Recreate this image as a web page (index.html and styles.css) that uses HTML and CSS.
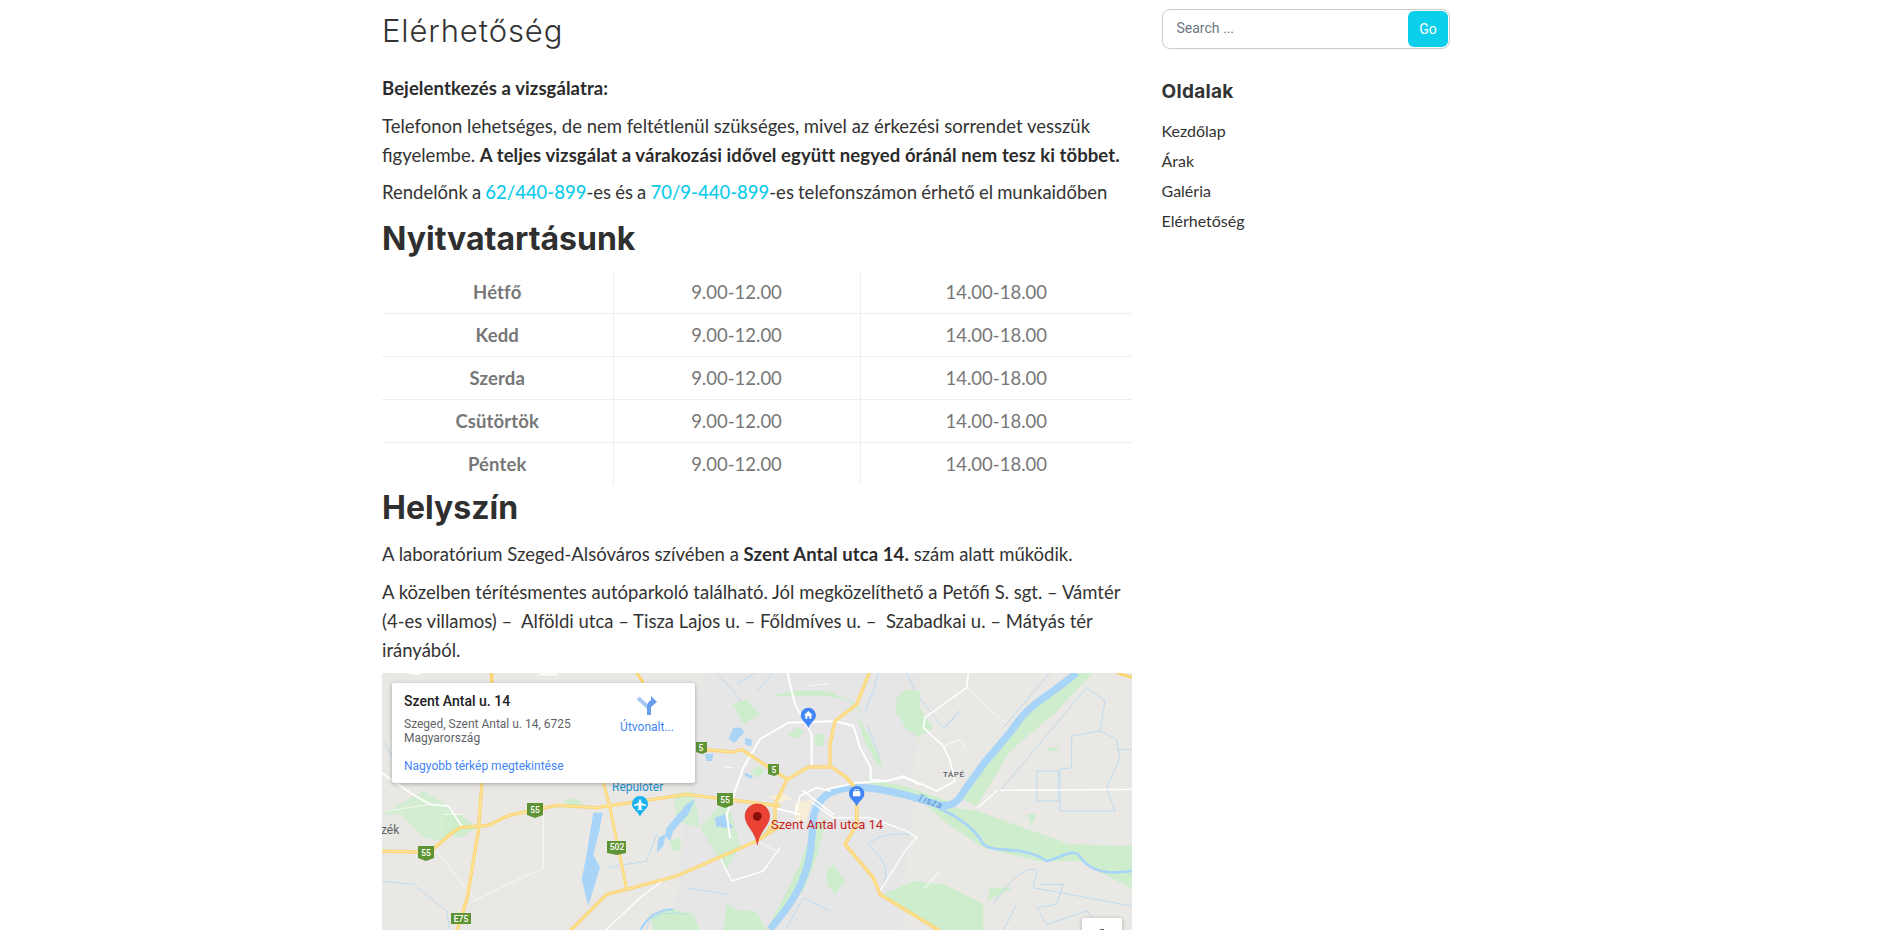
FILE: index.html
```html
<!DOCTYPE html>
<html lang="hu">
<head>
<meta charset="utf-8">
<title>Elérhetőség</title>
<link rel="stylesheet" href="styles.css">
</head>
<body>
<div class="page">
  <main class="content">
    <h1 class="title">Elérhetőség</h1>
    <p class="intro"><strong>Bejelentkezés a vizsgálatra:</strong></p>
    <p>Telefonon lehetséges, de nem feltétlenül szükséges, mivel az érkezési sorrendet vesszük figyelembe. <strong>A teljes vizsgálat a várakozási idővel együtt negyed óránál nem tesz ki többet.</strong></p>
    <p class="phones">Rendelőnk a <a href="#">62/440-899</a>-es és a <a href="#">70/9-440-899</a>-es telefonszámon érhető el munkaidőben</p>
    <h2 class="section">Nyitvatartásunk</h2>
    <table class="hours">
      <tr><th>Hétfő</th><td>9.00-12.00</td><td>14.00-18.00</td></tr>
      <tr><th>Kedd</th><td>9.00-12.00</td><td>14.00-18.00</td></tr>
      <tr><th>Szerda</th><td>9.00-12.00</td><td>14.00-18.00</td></tr>
      <tr><th>Csütörtök</th><td>9.00-12.00</td><td>14.00-18.00</td></tr>
      <tr><th>Péntek</th><td>9.00-12.00</td><td>14.00-18.00</td></tr>
    </table>
    <h2 class="section section-tight">Helyszín</h2>
    <p>A laboratórium Szeged-Alsóváros szívében a <strong>Szent Antal utca 14.</strong> szám alatt működik.</p>
    <p>A közelben térítésmentes autóparkoló található. Jól megközelíthető a Petőfi S. sgt. – Vámtér (4-es villamos) –&nbsp; Alföldi utca – Tisza Lajos u. – Főldmíves u. –&nbsp; Szabadkai u. – Mátyás tér irányából.</p>
    <div class="map">
      <svg class="map-art" viewBox="0 0 750 450" width="750" height="450" aria-hidden="true">
        <rect width="750" height="450" fill="#e9e8e4"/>
        <path d="M320,0H540L520,258H290Z" fill="#e6e6e6"/>
        <g transform="translate(-2,-2) scale(.33333)">
          <g fill="#cdedcd">
            <path d="M1060,100L1100,85 1135,130 1090,160Z"/>
            <path d="M5,430L60,400 130,360 200,400 240,465 190,510 130,500 60,430Z" opacity=".8"/>
            <path d="M190,430L240,430 290,470 240,500 190,490Z"/>
            <path d="M880,370L940,360 960,470 1040,380 1080,520 1040,600 960,470 890,450Z" opacity=".8"/>
            <path d="M870,510L900,500 905,540 880,540Z"/>
            <path d="M1040,700L1080,720 1130,720 1160,780H1030Z"/>
            <path d="M810,730L880,715 940,730 960,780H820Z"/>
            <path d="M550,390L590,380 610,405 570,410Z"/>
          </g>
          <g fill="#a8d4f8">
            <path d="M640,425L668,425 658,480 640,550 660,590 625,705 605,625 618,560Z"/>
            <path d="M860,470L890,435 920,400 945,385 925,430 880,480 870,510 855,495Z"/>
            <path d="M835,500L858,488 850,525 830,545Z"/>
            <path d="M1005,445L1030,430 1060,470 1025,470Z"/>
            <path d="M1060,170L1085,170 1070,210 1045,205Z"/>
            <path d="M975,250L1000,250 995,270 980,270Z"/>
            <path d="M1095,200L1115,205 1115,225 1095,215Z"/>
          </g>
          <g fill="none" stroke="#a8d4f8" stroke-width="2">
            <path d="M10,210L60,300 110,270"/>
            <path d="M0,630L100,640 200,720 210,780"/>
            <path d="M680,590L800,570 830,490"/>
            <path d="M920,650L1040,670"/>
            <path d="M800,780C800,730 860,720 920,730"/>
            <path d="M1010,5L1060,60 1110,130"/>
          </g>
          <path d="M780,780C800,740 830,715 880,715" fill="none" stroke="#a8d4f8" stroke-width="7"/>
          <g fill="none" stroke="#fff" stroke-linejoin="round" stroke-linecap="round">
            <path stroke-width="5" d="M5,305L90,365 150,400 205,405 245,465"/>
            <path stroke-width="5" d="M120,10L50,0M530,10L480,10"/>
            <path stroke-width="4" d="M1020,560L1055,630 1150,600 1200,530"/>
            <path stroke-width="4" d="M675,780L780,680 860,620"/>
            <path stroke-width="2" d="M1130,510L1200,545M170,540L280,680M490,420L490,590 280,690"/>
            <path stroke-width="2" d="M20,420L150,400M190,430L250,430"/>
          </g>
          <g fill="none" stroke-linejoin="round">
            <path stroke="#fcd570" stroke-width="10" d="M0,540L120,543C170,545 190,495 240,470L300,465C350,465 350,440 400,430L530,403 650,410 920,370 1040,385 1200,405"/>
            <path stroke="#fcd570" stroke-width="10" d="M335,0L335,40M306,335L295,480 262,680 230,780"/>
            <path stroke="#fcd570" stroke-width="9" d="M670,335L690,410 740,655"/>
            <path stroke="#fcd570" stroke-width="10" d="M570,780L680,670 740,655 890,615 1130,510 1200,465"/>
            <path stroke="#fcd570" stroke-width="9" d="M770,5L790,35"/>
            <path stroke="#fee9ad" stroke-width="3" d="M0,540L120,543C170,545 190,495 240,470L300,465C350,465 350,440 400,430L530,403 650,410 920,370 1040,385 1200,405M306,335L295,480 262,680 230,780M570,780L680,670 740,655 890,615 1130,510 1200,465M670,335L690,410 740,655"/>
          </g>
        </g>
        <g transform="translate(388,-2) scale(.33333)">
          <g fill="#cdedcd">
            <path d="M380,80L410,55 490,170 440,200 380,130Z"/>
            <path d="M920,5L970,5 850,130 720,240 620,405 570,380 700,200 830,70Z"/>
            <path d="M460,395L620,420 900,520 1086,525V655L930,570 800,570 640,530 520,450Z"/>
            <path d="M340,670L430,630 520,640 640,700 640,780H500Z"/>
            <path d="M290,320L420,350 560,400 460,395 300,360Z"/>
            <path d="M130,470L170,440 140,560 100,660 0,760 90,580Z"/>
            <path d="M170,600L190,580 225,630 195,670 170,640Z"/>
            <path d="M835,230H865V240H835ZM770,430H800L785,465ZM660,650H730L650,690Z"/>
          </g>
          <path d="M920,5C860,60 790,90 745,150C720,190 680,230 640,280L575,370C560,400 530,410 500,400L400,370C340,355 290,345 240,350C180,355 140,380 130,440C125,500 125,560 100,620C80,680 30,740 0,775" fill="none" stroke="#a8d4f8" stroke-width="22"/>
          <path d="M505,410C570,440 620,480 640,520C680,550 760,520 830,570C870,560 900,535 925,550C950,590 990,615 1086,600" fill="none" stroke="#a8d4f8" stroke-width="8"/>
          <g fill="none" stroke="#a8d4f8" stroke-width="2">
            <path d="M840,5L700,170M950,50L690,360M950,50L1005,90 990,180 905,195 905,290 870,295 870,420 1035,420 1010,350 1050,260 1040,205 990,180"/>
            <path d="M800,300H865V390H800ZM1086,235H1040"/>
            <path d="M410,5L440,70 520,170 570,120 525,170"/>
            <path d="M295,520C340,480 400,490 430,490M295,520C340,570 360,590 340,640"/>
            <path d="M670,700C720,620 780,580 800,600L790,650 950,680 1086,705M810,640L880,640 860,700 800,710 830,760 950,720 1000,780"/>
            <path d="M50,770L100,680 180,720M700,780L740,700"/>
          </g>
          <g fill="none" stroke="#fff" stroke-linejoin="round" stroke-linecap="round">
            <path stroke-width="5" d="M300,325L350,330 400,315 500,360 555,330 540,270 520,225 460,170 465,140 590,50 595,5"/>
            <path stroke-width="4" d="M690,358L1086,355M625,408L680,360"/>
            <path stroke-width="2" d="M590,50L705,155"/>
            <path stroke-width="4" d="M120,390L190,440 300,440 410,480 440,500 405,540 330,660"/>
            <path stroke-width="2" d="M460,650L510,600M465,655L510,600M520,225L570,205 590,235"/>
          </g>
          <g fill="none" stroke-linejoin="round">
            <path stroke="#fcd570" stroke-width="10" d="M260,400L260,460 225,520 310,620 330,670 510,780"/>
            <path stroke="#fcd570" stroke-width="9" d="M1040,5L1086,20"/>
            <path stroke="#fee9ad" stroke-width="3" d="M260,400L260,460 225,520 310,620 330,670 510,780"/>
          </g>
        </g>
        <g transform="translate(318,-2) scale(.33333)">
          <g fill="#cdedcd">
            <path d="M110,95L140,90 180,130 150,150Z"/>
            <path d="M265,190L295,165 312,185 285,205Z"/>
            <path d="M345,190H372V225H345Z"/>
            <path d="M585,100L620,55 660,60V180H620Z"/>
            <path d="M215,75L270,60 385,60 470,100 490,130 445,90 385,75 270,75Z"/>
            <path d="M470,130L510,200 550,290 530,280 490,200Z"/>
            <path d="M150,305L175,285 195,300 170,320Z"/>
          </g>
          <g fill="#a8d4f8">
            <path d="M90,200L125,170 132,185 100,217Z"/>
            <path d="M135,205L155,215 150,226 135,220Z"/>
            <path d="M15,250H40L35,270H20Z"/>
            <path d="M135,305L158,315 155,323 135,315Z"/>
            <path d="M45,440L75,430 80,460 50,470Z"/>
          </g>
          <g fill="none" stroke="#a8d4f8" stroke-width="2">
            <path d="M115,35L170,5M170,60L220,5M495,120L520,60 535,5M500,160L540,260"/>
          </g>
          <path d="M205,375L250,365 275,385 240,395Z" fill="#f7eed8"/>
          <path d="M285,395L335,385 320,450 285,450Z" fill="#f7eed8"/>
          <g fill="none" stroke="#fff" stroke-linejoin="round" stroke-linecap="round">
            <path stroke-width="6" d="M262,5L285,100 335,190 335,285"/>
            <path stroke-width="6" d="M90,500L80,430 130,290 180,205 265,155 405,150 460,165 480,230 512,290 512,325"/>
            <path stroke-width="6" d="M380,355L470,335 560,330 610,318 660,340"/>
            <path stroke-width="5" d="M285,430L300,375 350,350 390,360"/>
            <path stroke-width="5" d="M220,410L300,430M310,360L400,430"/>
            <path stroke-width="2" d="M325,45L385,38M100,290L70,288"/>
          </g>
          <g fill="none" stroke-linejoin="round">
            <path stroke="#fcd570" stroke-width="10" d="M0,235L100,243 125,235 200,285 262,325"/>
            <path stroke="#fcd570" stroke-width="10" d="M190,500L225,450 225,400 262,325 325,288H395L440,320 465,350"/>
            <path stroke="#fcd570" stroke-width="10" d="M510,0L470,100 405,150 390,220V288"/>
            <path stroke="#fcd570" stroke-width="10" d="M470,400V470"/>
            <path stroke="#fee9ad" stroke-width="3" d="M0,235L100,243 125,235 200,285 262,325M190,500L225,450 225,400 262,325 325,288H395L440,320 465,350M510,0L470,100 405,150 390,220V288M470,400V470"/>
          </g>
          <path d="M325,110a23,23 0 0 1 23,23c0,15 -15,20 -23,38c-8,-18 -23,-23 -23,-38a23,23 0 0 1 23,-23Z" fill="#4285f4"/>
          <path d="M325,120L338,133H334V143H328V136H322V143H316V133H312Z" fill="#fff"/>
          <path d="M470,345a23,23 0 0 1 23,23c0,15 -15,20 -23,38c-8,-18 -23,-23 -23,-38a23,23 0 0 1 23,-23Z" fill="#4285f4"/>
          <rect x="459" y="361" width="22" height="15" rx="2" fill="#fff"/>
          <rect x="465" y="356" width="10" height="6" fill="none" stroke="#fff" stroke-width="2"/>
        </g>
        <g transform="translate(-2,-2) scale(.33333)">
          <path d="M780,375a24,24 0 0 1 24,24c0,15 -16,20 -24,38c-8,-18 -24,-23 -24,-38a24,24 0 0 1 24,-24Z" fill="#1ab2ee"/>
          <path d="M780,382L785,396 798,401 798,405 785,403 784,413 788,416 788,418 780,416 772,418 772,416 776,413 775,403 762,405 762,401 775,396Z" fill="#fff"/>
        </g>
        <g class="shield-group">
          <path class="shield" d="M145,130h16v12l-8,3l-8,-3z"/><text class="shield-text" x="153" y="140">55</text>
          <path class="shield" d="M36,173h16v12l-8,3l-8,-3z"/><text class="shield-text" x="44" y="183">55</text>
          <path class="shield" d="M335,120h16v12l-8,3l-8,-3z"/><text class="shield-text" x="343" y="130">55</text>
          <path class="shield" d="M225,168h19v12l-9,2l-10,-2z"/><text class="shield-text" x="235" y="177">502</text>
          <path class="shield" d="M314,69h11v10l-5,2l-6,-2z"/><text class="shield-text" x="319" y="78">5</text>
          <path class="shield" d="M386,91h11v10l-5,2l-6,-2z"/><text class="shield-text" x="392" y="100">5</text>
          <rect class="shield" x="69" y="240" width="20" height="11"/><text class="shield-text" x="79" y="249">E75</text>
        </g>
        <text class="map-label map-dark" x="-1" y="161">zék</text>
        <text class="map-label map-blue" x="230" y="118">Repülőtér</text>
        <text class="map-small" x="561" y="104">TÁPÉ</text>
        <text class="map-river" transform="translate(535,127) rotate(20)">Tisza</text>
        <text class="map-red" x="389" y="156">Szent Antal utca 14</text>
        <g transform="translate(-2,-2) scale(.33333)">
          <path d="M1132,398a37,37 0 0 1 37,37c0,30 -30,42 -37,88c-7,-46 -37,-58 -37,-88a37,37 0 0 1 37,-37Z" fill="#ea4335" stroke="#c5221f" stroke-width="1"/>
          <circle cx="1132" cy="436" r="13" fill="#8a0f0a"/>
        </g>
      </svg>
      <div class="place-card">
        <div class="place-info">
          <div class="place-name">Szent Antal u. 14</div>
          <div class="place-address">Szeged, Szent Antal u. 14, 6725<br>Magyarország</div>
          <a class="place-link" href="#">Nagyobb térkép megtekintése</a>
        </div>
        <a class="directions" href="#">
          <svg width="20" height="20" viewBox="0 0 20 20" aria-hidden="true">
            <path d="M1,2L12,12V19" fill="none" stroke="#a9c8f5" stroke-width="4"/>
            <path d="M12,19V12C12,8 13,6 16,6" fill="none" stroke="#6a9fef" stroke-width="4"/>
            <path d="M14,0L20,6 14,11Z" fill="#6a9fef"/>
          </svg>
          <span>Útvonalt...</span>
        </a>
      </div>
      <div class="zoom-control"><span class="zoom-plus"></span></div>
    </div>
  </main>
  <aside class="sidebar">
    <form class="search">
      <input class="search-input" type="text" placeholder="Search ...">
      <button class="search-btn" type="button">Go</button>
    </form>
    <h3 class="widget-title">Oldalak</h3>
    <ul class="menu">
      <li><a href="#">Kezdőlap</a></li>
      <li><a href="#">Árak</a></li>
      <li><a href="#">Galéria</a></li>
      <li><a href="#">Elérhetőség</a></li>
    </ul>
  </aside>
</div>
</body>
</html>
```
FILE: styles.css
```css
* { box-sizing: border-box; }
html, body { margin: 0; padding: 0; background: #fff; }
body {
  font-family: "Lato", "Liberation Sans", sans-serif;
  font-size: 18.5px;
  line-height: 28.8px;
  color: #333;
}
a { color: #0ccbea; text-decoration: none; }
.page {
  display: grid;
  grid-template-columns: 750px 288.5px;
  column-gap: 29.5px;
  padding-left: 382px;
  align-items: start;
}
.content p { margin: 0 0 9px; }
.content strong { font-weight: 700; color: #2b2b2b; letter-spacing: .09px; }
.content p a { font-weight: 500; }
.content .phones { word-spacing: -.6px; }
.title {
  margin: 11px 0 0;
  height: 40px;
  font-family: "Inter", "Liberation Sans", sans-serif;
  font-weight: 300;
  font-size: 31px;
  line-height: 40px;
  letter-spacing: .9px;
  color: #333;
}
.intro { margin-top: 23px !important; }
.section {
  margin: 12px 0 12px;
  font-family: "Inter", "Liberation Sans", sans-serif;
  font-weight: 700;
  font-size: 32px;
  line-height: 40px;
  color: #2f2f2f;
}
.section-tight { margin: 3px 0 12px; }
.hours { width: 750px; border-collapse: collapse; table-layout: fixed; }
.hours th, .hours td {
  height: 42.8px;
  padding: 0;
  text-align: center;
  color: #777;
  border-left: 1px solid #eee;
  border-top: 1px solid #eee;
}
.hours th { width: 231px; font-weight: 700; border-left: 0; letter-spacing: .14px; }
.hours td:nth-child(2) { width: 247px; }
.hours tr:first-child th, .hours tr:first-child td { border-top: 0; }
.map { position: relative; width: 750px; height: 450px; margin-top: 8px; overflow: hidden; }
.map-art { display: block; }
.shield { fill: #5f9434; }
.shield-text { font: 500 8.5px "Roboto", sans-serif; fill: #fff; text-anchor: middle; }
.map-label { font: 400 12px "Roboto", sans-serif; }
.map-dark { fill: #5f6368; }
.map-blue { fill: #1a8fd0; }
.map-small { font: 500 8px "Roboto", sans-serif; fill: #5f6368; letter-spacing: .5px; }
.map-river { font: italic 400 9.5px "Roboto", sans-serif; fill: #4f8fd0; letter-spacing: .8px; }
.map-red { font: 400 13px "Roboto", sans-serif; fill: #c5221f; }
.place-card {
  position: absolute;
  top: 10px;
  left: 10px;
  width: 303px;
  height: 100px;
  background: #fff;
  border-radius: 2px;
  box-shadow: 0 1px 4px rgba(0,0,0,.3);
  display: flex;
  justify-content: space-between;
  padding: 9px 12px;
  font-family: "Roboto", sans-serif;
}
.place-name { font-size: 14px; font-weight: 500; line-height: 18px; color: #202124; }
.place-address { font-size: 12px; line-height: 14px; color: #5f6368; margin-top: 7px; }
.place-link { display: block; font-size: 12px; line-height: 14px; color: #4285f4; margin-top: 14px; }
.directions {
  display: flex;
  flex-direction: column;
  align-items: center;
  width: 60px;
  margin-right: 6px;
  padding-top: 4px;
  gap: 4px;
  font-size: 12px;
  line-height: 14px;
  color: #4285f4;
}
.zoom-control {
  position: absolute;
  top: 245px;
  left: 700px;
  width: 40px;
  height: 80px;
  background: #fff;
  border-radius: 2px;
  box-shadow: 0 1px 4px rgba(0,0,0,.3);
}
.zoom-plus {
  position: absolute;
  left: 18px;
  top: 11px;
  width: 4px;
  height: 14px;
  background: #666;
}
.sidebar { padding-top: 9px; }
.search {
  display: flex;
  align-items: center;
  justify-content: space-between;
  width: 288.5px;
  height: 40px;
  padding: 0 1px 0 0;
  border: 1px solid #ccc;
  border-radius: 8px;
  box-shadow: 0 0 1px rgba(0,0,0,.1);
}
.search-input {
  flex: 1;
  min-width: 0;
  height: 36px;
  padding: 0 0 2px 14px;
  border: 0;
  outline: 0;
  background: transparent;
  font: 400 14px "Roboto", sans-serif;
  color: #555;
}
.search-input::placeholder { color: #6b7780; opacity: 1; }
.search-btn {
  width: 40px;
  height: 36px;
  padding: 0;
  border: 0;
  border-radius: 6px;
  background: #0ccfec;
  color: #fff;
  font: 400 14px "Roboto", sans-serif;
}
.widget-title {
  margin: 28px 0 0;
  font-family: "Inter", "Liberation Sans", sans-serif;
  font-weight: 700;
  font-size: 19px;
  line-height: 30px;
  letter-spacing: .3px;
  color: #333;
}
.menu { list-style: none; margin: 9px 0 0; padding: 0; font-size: 16px; line-height: 30px; }
.menu a { color: #333; }
```
